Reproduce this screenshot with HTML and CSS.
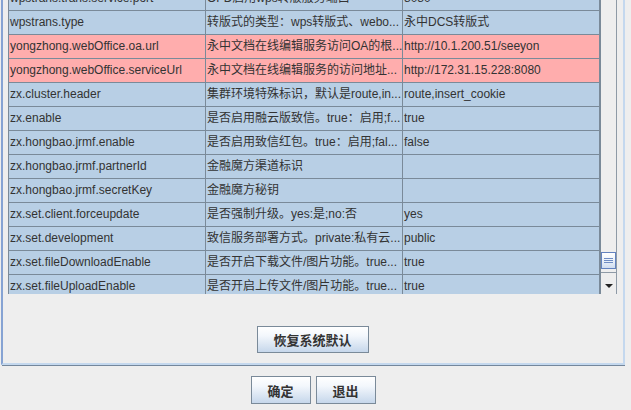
FILE: index.html
```html
<!doctype html>
<html><head>
<meta charset="utf-8">
<title>系统参数</title>
<link rel="stylesheet" href="styles.css">
</head>
<body>
<div class="dialog">
	<div class="panel">
		<div class="pane">
			<div class="grid">
				<div class="row first"><div>wpstrans.trans.service.port</div><div>OFD启用wps转版服务端口</div><div>8080</div></div>
				<div class="row"><div>wpstrans.type</div><div>转版式的类型：wps转版式、webo...</div><div>永中DCS转版式</div></div>
				<div class="row pink"><div>yongzhong.webOffice.oa.url</div><div>永中文档在线编辑服务访问OA的根...</div><div>http://10.1.200.51/seeyon</div></div>
				<div class="row pink"><div>yongzhong.webOffice.serviceUrl</div><div>永中文档在线编辑服务的访问地址...</div><div>http://172.31.15.228:8080</div></div>
				<div class="row"><div>zx.cluster.header</div><div>集群环境特殊标识，默认是route,in...</div><div>route,insert_cookie</div></div>
				<div class="row"><div>zx.enable</div><div>是否启用融云版致信。true：启用;f...</div><div>true</div></div>
				<div class="row"><div>zx.hongbao.jrmf.enable</div><div>是否启用致信红包。true：启用;fal...</div><div>false</div></div>
				<div class="row"><div>zx.hongbao.jrmf.partnerId</div><div>金融魔方渠道标识</div><div></div></div>
				<div class="row"><div>zx.hongbao.jrmf.secretKey</div><div>金融魔方秘钥</div><div></div></div>
				<div class="row"><div>zx.set.client.forceupdate</div><div>是否强制升级。yes:是;no:否</div><div>yes</div></div>
				<div class="row"><div>zx.set.development</div><div>致信服务部署方式。private:私有云...</div><div>public</div></div>
				<div class="row"><div>zx.set.fileDownloadEnable</div><div>是否开启下载文件/图片功能。true...</div><div>true</div></div>
				<div class="row"><div>zx.set.fileUploadEnable</div><div>是否开启上传文件/图片功能。true...</div><div>true</div></div>
			</div>
			<div class="vbar">
				<div class="track"></div>
				<div class="thumb">
					<svg width="9" height="5" viewBox="0 0 9 5"><path d="M0 0.5h9M0 2.5h9M0 4.5h9" stroke="#6f8cc4" stroke-width="1"/></svg>
				</div>
				<div class="down">
					<svg width="8" height="4" viewBox="0 0 8 4"><path d="M0 0h8L4 4z" fill="#222"/></svg>
				</div>
			</div>
		</div>
		<div class="panel-foot"><button class="btn wide">恢复系统默认</button></div>
	</div>
	<div class="actions">
		<button class="btn">确定</button>
		<button class="btn">退出</button>
	</div>
</div>
</body></html>
```
FILE: styles.css
```css
body {
	margin: 0;
	background: #eeeeee;
	font-family: "Liberation Sans", "Noto Sans CJK SC", sans-serif;
	font-size: 12px;
	color: #333;
}
.dialog {
	width: 624px;
	margin-left: 1px;
	height: 410px;
	overflow: hidden;
}
.panel {
	border-left: 2px solid #86a3d3;
	border-right: 2px solid #c4d8ee;
	border-bottom: 2px solid #c4d8ee;
	box-shadow: 1px 1px 0 #74879c;
	padding: 0 6px 0 5px;
}
.pane {
	display: flex;
	height: 294px;
}
.grid {
	width: 593px;
	height: 294px;
	overflow: hidden;
	border-left: 1px solid #7a8a99;
	box-sizing: border-box;
}
.row {
	display: grid;
	grid-template-columns: 197px 197px 198px;
	height: 24px;
	background: #b8cfe5;
}
.row.first { margin-top: -13px; }
.row.pink { background: #ffadad; }
.row div {
	box-sizing: border-box;
	border-right: 1px solid #7a8a99;
	border-bottom: 1px solid #7a8a99;
	padding-left: 1px;
	line-height: 23px;
	white-space: nowrap;
	overflow: hidden;
}
.row div:last-child { border-right-width: 2px; }
.vbar {
	width: 15px;
	border-right: 1px solid #8e9aa6;
	display: flex;
	flex-direction: column;
	background: #eeeeee;
}
.track { flex: 1; }
.thumb {
	height: 17px;
	box-sizing: border-box;
	border: 1px solid #6382bf;
	background: linear-gradient(#ffffff, #e6eef8 60%, #cfdcef);
	display: flex;
	align-items: center;
	justify-content: center;
}
.down {
	height: 22px;
	margin-top: 3px;
	box-sizing: border-box;
	border-top: 1px solid #8e9aa6;
	display: flex;
	align-items: flex-end;
	justify-content: center;
	padding-bottom: 6px;
}
.down svg { display: block; }
.panel-foot {
	display: flex;
	justify-content: center;
	padding: 32px 0 10px;
}
.btn {
	font-family: "Noto Sans CJK SC", sans-serif;
	font-weight: bold;
	font-size: 13px;
	color: #333;
	width: 60px;
	height: 28px;
	padding: 0;
	border: 1px solid #7a8a99;
	background: linear-gradient(#ffffff, #f3f7fc 35%, #c6d7eb);
}
.btn.wide {
	width: 112px;
	height: 27px;
}
.actions {
	display: flex;
	justify-content: center;
	gap: 5px;
	margin-top: 11px;
}
```
